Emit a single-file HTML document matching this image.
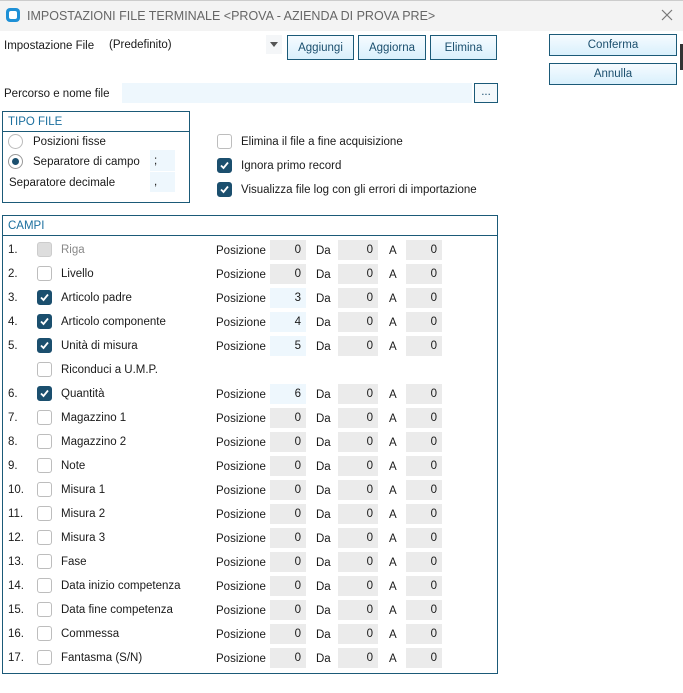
<!DOCTYPE html>
<html><head><meta charset="utf-8"><style>
*{box-sizing:border-box;margin:0;padding:0}
body{width:683px;height:693px;background:#fff;font-family:"Liberation Sans",sans-serif;font-size:11.5px;color:#1a1a1a;position:relative;overflow:hidden}
.a{position:absolute;white-space:nowrap}
.btn{position:absolute;border:1px solid #1b5a78;background:linear-gradient(#f6fbff,#d9f0fc);color:#1b4f6e;text-align:center;font-size:11.5px}
.fld{position:absolute;height:20px;background:#ebebeb;text-align:right;padding-right:5px;line-height:20px}
.fld.e{background:#eef7fd}
.cb{position:absolute;width:15px;height:15px;border:1px solid #bdbdbd;border-radius:3px;background:#fff}
.cb.on{background:#1b4f6e;border-color:#1b4f6e}
.cb.dis{background:#ddd;border-color:#ccc}
.cb.on svg{position:absolute;left:1px;top:1px}
.box{position:absolute;border:1px solid #1b5a78}
.hd{color:#1b6f9e;position:absolute;left:5px;top:4px}
</style></head><body>
<div class="a" style="left:0;top:0;width:683px;height:31px;background:#f3f3f3;border-top:1px solid #ccc"></div>
<div class="a" style="left:6px;top:8px;width:14px;height:14px;background:#1e90d6;border-radius:4px"><div style="position:absolute;left:3px;top:3px;width:8px;height:8px;background:#fff;border-radius:2px"></div></div>
<div class="a" style="left:27px;top:9px;font-size:12.5px;color:#666">IMPOSTAZIONI FILE TERMINALE &lt;PROVA - AZIENDA DI PROVA PRE&gt;</div>
<svg class="a" style="left:661px;top:9px" width="12" height="12"><path d="M1 1L11 11M11 1L1 11" stroke="#777" stroke-width="1.2"/></svg>
<div class="a" style="left:680px;top:44px;width:3px;height:26px;background:#333"></div>

<div class="a" style="left:4px;top:40px">Impostazione File</div>
<div class="a" style="left:109px;top:39px">(Predefinito)</div>
<div class="a" style="left:266px;top:35px;width:16px;height:19px;background:#f4f6f8"></div>
<svg class="a" style="left:270px;top:42px" width="8" height="5"><path d="M0 0L8 0L4 5Z" fill="#555"/></svg>
<div class="btn" style="left:287px;top:35px;width:67px;height:25px;line-height:25px">Aggiungi</div>
<div class="btn" style="left:358px;top:35px;width:68px;height:25px;line-height:25px">Aggiorna</div>
<div class="btn" style="left:430px;top:35px;width:67px;height:25px;line-height:25px">Elimina</div>
<div class="btn" style="left:549px;top:34px;width:128px;height:22px;line-height:21px">Conferma</div>
<div class="btn" style="left:549px;top:63px;width:128px;height:22px;line-height:21px">Annulla</div>

<div class="a" style="left:4px;top:88px">Percorso e nome file</div>
<div class="a" style="left:122px;top:83px;width:350px;height:20px;background:#eef7fd"></div>
<div class="btn" style="left:474px;top:83px;width:24px;height:20px;line-height:16px;background:#f4f9fc">...</div>

<div class="box" style="left:2px;top:111px;width:188px;height:92px">
<div class="hd">TIPO FILE</div>
<div style="position:absolute;left:0;right:0;top:19px;border-top:1px solid #1b5a78"></div>
</div>
<div class="a" style="left:8px;top:134px;width:15px;height:15px;border:1px solid #bbb;border-radius:50%"></div>
<div class="a" style="left:8px;top:154px;width:15px;height:15px;border:1px solid #999;border-radius:50%"><div style="position:absolute;left:3px;top:3px;width:7px;height:7px;border-radius:50%;background:#1b4f6e"></div></div>
<div class="a" style="left:33px;top:136px">Posizioni fisse</div>
<div class="a" style="left:33px;top:156px">Separatore di campo</div>
<div class="a" style="left:9px;top:177px">Separatore decimale</div>
<div class="a" style="left:150px;top:150px;width:25px;height:21px;background:#eef7fd;padding:5px 0 0 4px">;</div>
<div class="a" style="left:150px;top:172px;width:25px;height:20px;background:#eef7fd;padding:4px 0 0 4px">,</div>

<div class="cb" style="left:217px;top:134px"></div>
<div class="cb on" style="left:217px;top:158px"><svg width="11" height="11"><path d="M2 5.5L4.5 8L9 2.5" stroke="#fff" stroke-width="1.8" fill="none"/></svg></div>
<div class="cb on" style="left:217px;top:182px"><svg width="11" height="11"><path d="M2 5.5L4.5 8L9 2.5" stroke="#fff" stroke-width="1.8" fill="none"/></svg></div>
<div class="a" style="left:241px;top:136px">Elimina il file a fine acquisizione</div>
<div class="a" style="left:241px;top:160px">Ignora primo record</div>
<div class="a" style="left:241px;top:184px">Visualizza file log con gli errori di importazione</div>

<div class="box" style="left:2px;top:215px;width:496px;height:459px">
<div class="hd">CAMPI</div>
<div style="position:absolute;left:0;right:0;top:19px;border-top:1px solid #1b5a78"></div>
</div>
<div id="rows"></div>
<script>
var R=[["1.","Riga",0,"0",1,0],["2.","Livello",0,"0",0,0],["3.","Articolo padre",1,"3",0,1],["4.","Articolo componente",1,"4",0,1],["5.","Unità di misura",1,"5",0,1],["","Riconduci a U.M.P.",0,null,0,0],["6.","Quantità",1,"6",0,1],["7.","Magazzino 1",0,"0",0,0],["8.","Magazzino 2",0,"0",0,0],["9.","Note",0,"0",0,0],["10.","Misura 1",0,"0",0,0],["11.","Misura 2",0,"0",0,0],["12.","Misura 3",0,"0",0,0],["13.","Fase",0,"0",0,0],["14.","Data inizio competenza",0,"0",0,0],["15.","Data fine competenza",0,"0",0,0],["16.","Commessa",0,"0",0,0],["17.","Fantasma (S/N)",0,"0",0,0]];
var h="",ck='<svg width="11" height="11"><path d="M2 5.5L4.5 8L9 2.5" stroke="#fff" stroke-width="1.8" fill="none"/></svg>';
R.forEach(function(r,i){var y=250+i*24,t=y-6;
h+='<div class="a" style="left:8px;top:'+t+'px">'+r[0]+'</div>';
h+='<div class="cb'+(r[2]?' on':'')+(r[4]?' dis':'')+'" style="left:37px;top:'+(y-8)+'px">'+(r[2]?ck:'')+'</div>';
h+='<div class="a" style="left:61px;top:'+t+'px;'+(r[4]?'color:#888':'')+'">'+r[1]+'</div>';
if(r[3]!==null){
h+='<div class="a" style="left:216px;top:'+(t+1)+'px">Posizione</div>';
h+='<div class="fld'+(r[5]?' e':'')+'" style="left:270px;top:'+(y-10)+'px;width:36px">'+r[3]+'</div>';
h+='<div class="a" style="left:316px;top:'+(t+1)+'px">Da</div>';
h+='<div class="fld" style="left:338px;top:'+(y-10)+'px;width:40px">0</div>';
h+='<div class="a" style="left:389px;top:'+(t+1)+'px">A</div>';
h+='<div class="fld" style="left:406px;top:'+(y-10)+'px;width:36px">0</div>';}
});
document.getElementById("rows").innerHTML=h;
</script>
</body></html>
